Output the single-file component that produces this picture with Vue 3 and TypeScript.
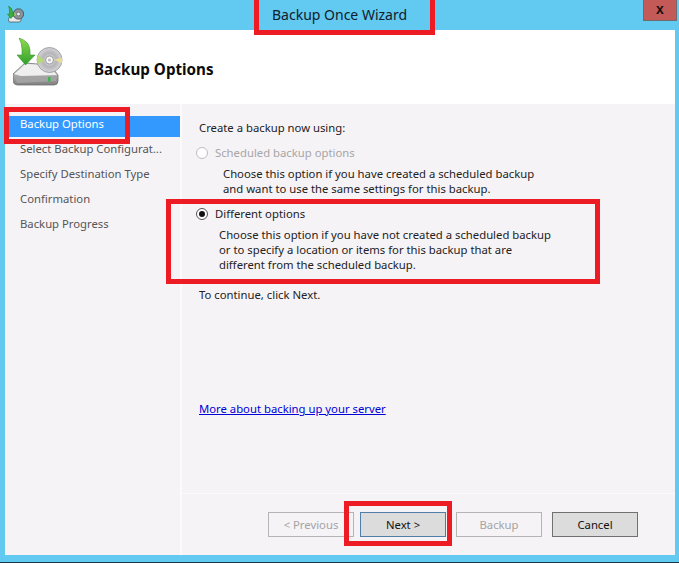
<script setup lang="ts">
const steps: string[] = ['Backup Options', 'Select Backup Configurat...', 'Specify Destination Type', 'Confirmation', 'Backup Progress']
const buttons = [
  { label: '< Previous', kind: 'off' },
  { label: 'Next >', kind: 'default' },
  { label: 'Backup', kind: 'off' },
  { label: 'Cancel', kind: 'on' },
]
</script>

<template>
  <div class="window">
    <div class="titlebar">
      <svg class="icon-small" viewBox="0 0 18 17">
        <path d="M3 11.500 L7 10 L15 11 L15 14 Q15 16 13 16 L4 16 Q2.500 16 2.500 14 Z" fill="#e9e9e9" stroke="#3f4f58" stroke-width="0.7" />
        <circle cx="12.500" cy="8" r="5.200" fill="#8d9298" stroke="#3f4a52" stroke-width="0.8" />
        <path d="M8 6.500 A5 5 0 0 0 7.800 10 L11 8.500 Z" fill="#a9cf6b" />
        <circle cx="12.500" cy="8" r="1.800" fill="#eef0f2" stroke="#3f4a52" stroke-width="0.5" />
        <path d="M2.500 0 Q6.500 2 6.500 6 L6.500 8 L8.500 8 L4.800 12.500 L1.500 8 L3.500 8 L3.500 5 Q3.500 2.500 2.500 0 Z" fill="#3fae3a" stroke="#1f7d2b" stroke-width="0.5" />
      </svg>
      <span class="title">Backup Once Wizard</span>
      <span class="close">x</span>
    </div>
    <div class="client">
      <div class="header">
        <svg class="icon-big" viewBox="0 0 50 48">
          <defs>
            <linearGradient id="arrow" x1="0" y1="0" x2="0" y2="1">
              <stop offset="0" stop-color="#8fdc4e" />
              <stop offset="1" stop-color="#2f9e2c" />
            </linearGradient>
            <linearGradient id="drive" x1="0" y1="0" x2="0" y2="1">
              <stop offset="0" stop-color="#e4e4e4" />
              <stop offset="1" stop-color="#7f7f7f" />
            </linearGradient>
            <radialGradient id="disc">
              <stop offset="0" stop-color="#f4f4f4" />
              <stop offset="0.55" stop-color="#b4b4b9" />
              <stop offset="1" stop-color="#d6d6da" />
            </radialGradient>
          </defs>
          <path d="M0 36 L12 25 L37 27 L45 37 L45 43 Q45 47 41 47 L5 47 Q0 47 0 42 Z" fill="url(#drive)" stroke="#6f6f6f" stroke-width="0.8" />
          <path d="M1 36 L13 26 L36 28 L44 37 L8 38 Z" fill="#efefef" />
          <path d="M2 39 L43 38 L43 43 L4 45 Z" fill="#a3a3a3" />
          <rect x="35" y="39" width="2.500" height="4.500" fill="#39b54a" />
          <circle cx="36.500" cy="22" r="12.500" fill="url(#disc)" stroke="#8f8f94" stroke-width="0.8" />
          <path d="M25 17 A12.500 12.500 0 0 0 24.500 26 L32 23 Z" fill="#b7d97a" />
          <path d="M48.500 25.500 A12.500 12.500 0 0 0 49 20 L41 21.500 Z" fill="#e7df8f" />
          <circle cx="36.500" cy="22" r="4" fill="#f7f7f7" stroke="#8a8a8a" stroke-width="0.8" />
          <circle cx="36.500" cy="22" r="1.600" fill="#bcbcc0" />
          <path d="M6 0 Q16 3 17 12 L17 17 L22 17 L12.500 27 L4 17 L9 17 L9 11 Q9 5 6 0 Z" fill="url(#arrow)" stroke="#3a9a34" stroke-width="0.6" />
        </svg>
        <h1 class="heading">Backup Options</h1>
      </div>
      <div class="body">
        <nav class="sidebar">
          <div v-for="(step, i) in steps" :key="step" class="step" :class="{ active: i === 0 }">{{ step }}</div>
        </nav>
        <div class="panel">
          <div class="content">
            <p class="lead">Create a backup now using:</p>
            <div class="option disabled">
              <span class="radio"></span>
              <span>Scheduled backup options</span>
            </div>
            <p class="desc first">Choose this option if you have created a scheduled backup<br />and want to use the same settings for this backup.</p>
            <div class="option second">
              <span class="radio checked"></span>
              <span>Different options</span>
            </div>
            <p class="desc">Choose this option if you have not created a scheduled backup<br />or to specify a location or items for this backup that are<br />different from the scheduled backup.</p>
            <p class="continue">To continue, click Next.</p>
            <a class="more">More about backing up your server</a>
          </div>
          <div class="footer">
            <button v-for="b in buttons" :key="b.label" class="btn" :class="b.kind" type="button">{{ b.label }}</button>
          </div>
        </div>
      </div>
    </div>
    <div class="mark mark-title"></div>
    <div class="mark mark-step"></div>
    <div class="mark mark-option"></div>
    <div class="mark mark-next"></div>
  </div>
</template>

<style>
html, body { margin: 0; background: #62c9f0; }
</style>

<style scoped>
.window {
  position: relative;
  width: 679px;
  height: 563px;
  box-sizing: border-box;
  display: flex;
  flex-direction: column;
  background: #62c9f0;
  border-bottom: 1px solid #16384a;
  padding-bottom: 7px;
  overflow: hidden;
  font-family: "Noto Sans", "Open Sans", sans-serif;
  font-size: 11.3px;
  color: #1a1a1a;
}
.titlebar {
  height: 30px;
  flex: none;
  display: flex;
  align-items: flex-start;
  position: relative;
}
.icon-small { width: 18px; height: 17px; margin: 6px 0 0 6px; }
.title {
  position: absolute;
  left: 272px;
  top: 5px;
  font-size: 14px;
  line-height: 20px;
  color: #10202c;
}
.close {
  position: absolute;
  left: 643px;
  top: -1px;
  width: 34px;
  height: 22px;
  box-sizing: border-box;
  background: #c45a57;
  border: 1px solid #6c6c6c;
  font-family: "Liberation Sans", sans-serif;
  font-size: 14px;
  font-weight: 700;
  line-height: 18px;
  text-align: center;
  color: #111;
}
.client {
  flex: 1;
  margin: 0 4px 0 5px;
  display: flex;
  flex-direction: column;
  background: #f6f3f7;
}
.header {
  height: 74px;
  flex: none;
  background: #fff;
  display: flex;
  align-items: flex-start;
}
.icon-big { width: 50px; height: 48px; margin: 8px 0 0 8px; }
.heading {
  margin: 28px 0 0 31px;
  font-size: 15.2px;
  line-height: 22px;
  font-weight: 700;
  color: #0c0c0c;
}
.body { flex: 1; display: flex; min-height: 0; }
.sidebar {
  width: 177px;
  flex: none;
  box-sizing: border-box;
  padding-top: 12px;
  border-right: 2px solid #fbfbfc;
}
.step {
  height: 25px;
  line-height: 16px;
  padding-left: 15px;
  box-sizing: border-box;
  color: #555;
}
.step.active {
  height: 21px;
  margin-bottom: 4px;
  background: #3399ff;
  color: #fff;
}
.panel { flex: 1; display: flex; flex-direction: column; min-width: 0; }
.content { flex: 1; padding: 16px 0 0 17px; line-height: 15px; }
.lead { margin: 0; line-height: 16px; color: #222; }
.option { display: flex; align-items: center; gap: 7px; margin: 9px 0 0 -3px; line-height: 16px; color: #222; }
.option.disabled { color: #a6a6a6; }
.option.second { margin-top: 10px; }
.radio {
  width: 12px;
  height: 12px;
  box-sizing: border-box;
  border-radius: 50%;
  border: 1px solid #555;
  background: #fff;
  position: relative;
  flex: none;
}
.disabled .radio { border-color: #bdbdbd; }
.radio.checked::after {
  content: "";
  position: absolute;
  left: 2px;
  top: 2px;
  width: 6px;
  height: 6px;
  border-radius: 50%;
  background: #111;
}
.desc { margin: 5px 0 0 20px; color: #222; }
.desc.first { margin-left: 24px; }
.continue { margin: 15px 0 0; line-height: 16px; color: #222; }
.more {
  display: block;
  margin-top: 98px;
  line-height: 16px;
  color: #0000d8;
  text-decoration: underline;
}
.footer {
  height: 62px;
  flex: none;
  box-sizing: border-box;
  border-top: 1px solid #fbfbfc;
  display: flex;
  gap: 10px;
  padding: 18px 0 0 86px;
}
.btn {
  width: 86px;
  height: 25px;
  padding: 0;
  box-sizing: border-box;
  font: inherit;
  border: 1px solid #b5b5b5;
  background: #f6f3f7;
  color: #a3a3a3;
}
.btn:first-child { margin-right: -4px; }
.btn.default { background: #dcdcdc; border-color: #4f7fa8; color: #111; }
.btn.on { background: #dcdcdc; border-color: #707070; color: #111; }
.mark { position: absolute; box-sizing: border-box; border: 5px solid #ed1c24; pointer-events: none; }
.mark-title { left: 254px; top: -5px; width: 181px; height: 40px; }
.mark-step { left: 4px; top: 107px; width: 126px; height: 37px; }
.mark-option { left: 166px; top: 199px; width: 434px; height: 85px; }
.mark-next { left: 344px; top: 501px; width: 108px; height: 45px; }
</style>
